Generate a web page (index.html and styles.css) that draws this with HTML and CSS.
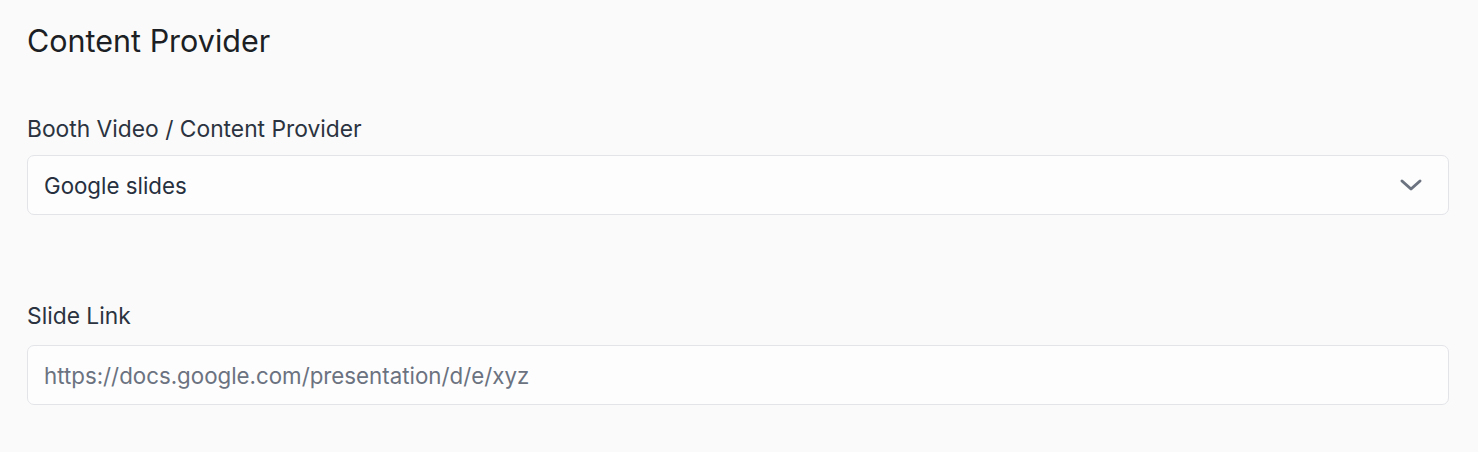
FILE: index.html
```html
<!DOCTYPE html>
<html lang="en">
<head>
    <meta charset="UTF-8" />
    <meta name="viewport" content="width=device-width, initial-scale=1.0"/>
    <title>Content Provider</title>
    <link rel="stylesheet" href="styles.css">
</head>
<body>
    <div class="panel">
        <h2 class="panel-title">Content Provider</h2>

        <div class="field">
            <label class="field-label" for="provider">Booth Video / Content Provider</label>
            <div class="select-wrap">
                <select id="provider" class="select">
                    <option>Google slides</option>
                    <option>YouTube</option>
                    <option>Vimeo</option>
                </select>
                <svg class="chevron" width="24" height="14" viewBox="0 0 24 14" fill="none" stroke="currentColor" stroke-width="3" stroke-linecap="round" stroke-linejoin="round">
                    <path d="M3 3l9 8 9-8"/>
                </svg>
            </div>
        </div>

        <div class="field field-link">
            <label class="field-label" for="slideLink">Slide Link</label>
            <input id="slideLink" class="input" type="text" placeholder="https://docs.google.com/presentation/d/e/xyz">
        </div>
    </div>
</body>
</html>
```

FILE: styles.css
```css
body { margin: 0; background-color: #fafafa; font-family: Inter, "Noto Sans", sans-serif; color: #1f2937; }
.panel { padding: 21px 29px 0 27px; }
.panel-title { margin: 0; font-size: 30.5px; font-weight: 400; line-height: 40px; color: #1c1f24; }
.field { margin-top: 52px; }
.field-link { margin-top: 85px; }
.field-label { display: block; font-size: 22.8px; line-height: 32px; font-weight: 400; color: #2b3340; margin-bottom: 10px; }
.field-link .field-label { margin-bottom: 13px; }

.select-wrap { position: relative; }
.select, .input {
    box-sizing: border-box;
    display: block;
    width: 100%;
    height: 60px;
    padding: 0 16px;
    border: 1px solid #e3e4e8;
    border-radius: 7px;
    background-color: #fdfdfd;
    font-family: inherit;
    font-size: 22.3px;
    color: #27303f;
    outline: none;
}
.select { appearance: none; -webkit-appearance: none; }
.input::placeholder { color: #6b7280; }
.chevron { position: absolute; right: 26px; top: 23px; color: #6b7280; pointer-events: none; }
```
